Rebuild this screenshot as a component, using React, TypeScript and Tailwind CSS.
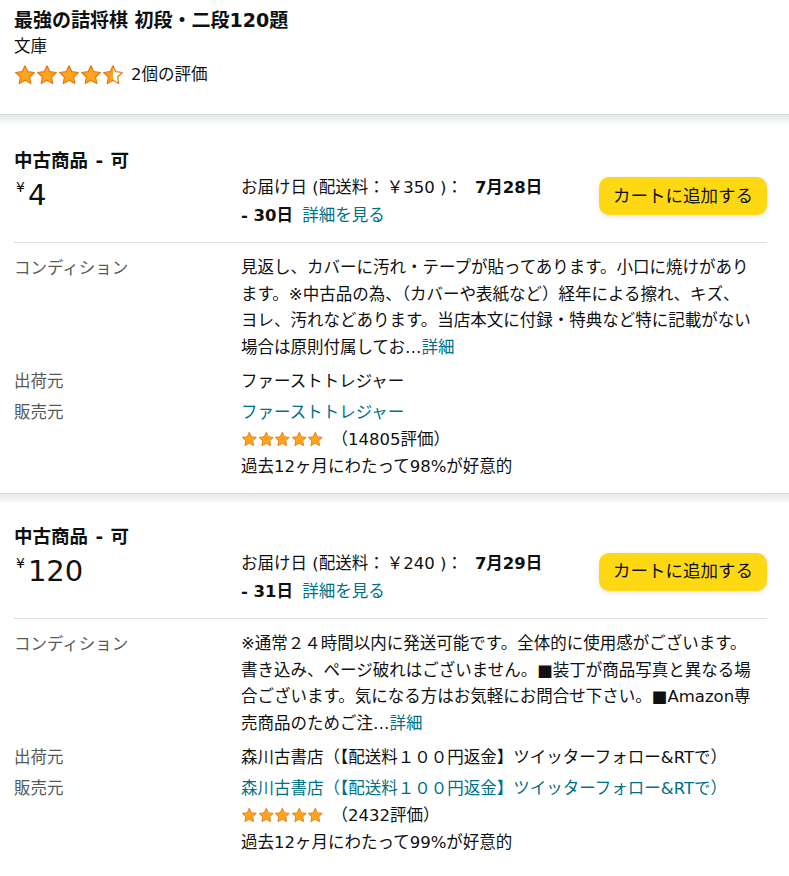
import React from 'react';

type Offer = {
  price: string;
  shipping: string;
  dateFrom: string;
  dateTo: string;
  condition: string[];
  shipper: string;
  seller: string;
  ratings: string;
  positive: string;
};

const OFFERS: Offer[] = [
  {
    price: '4',
    shipping: '350',
    dateFrom: '7月28日',
    dateTo: '- 30日',
    condition: [
      '見返し、カバーに汚れ・テープが貼ってあります。小口に焼けがあり',
      'ます。※中古品の為、（カバーや表紙など）経年による擦れ、キズ、',
      'ヨレ、汚れなどあります。当店本文に付録・特典など特に記載がない',
      '場合は原則付属してお…',
    ],
    shipper: 'ファーストトレジャー',
    seller: 'ファーストトレジャー',
    ratings: '（14805評価）',
    positive: '過去12ヶ月にわたって98%が好意的',
  },
  {
    price: '120',
    shipping: '240',
    dateFrom: '7月29日',
    dateTo: '- 31日',
    condition: [
      '※通常２４時間以内に発送可能です。全体的に使用感がございます。',
      '書き込み、ページ破れはございません。■装丁が商品写真と異なる場',
      '合ございます。気になる方はお気軽にお問合せ下さい。■Amazon専',
      '売商品のためご注…',
    ],
    shipper: '森川古書店（【配送料１００円返金】ツイッターフォロー&RTで）',
    seller: '森川古書店（【配送料１００円返金】ツイッターフォロー&RTで）',
    ratings: '（2432評価）',
    positive: '過去12ヶ月にわたって99%が好意的',
  },
];

const STAR = 'M12 1.8l3.1 6.6 7.1.9-5.2 4.9 1.3 7.1L12 17.8l-6.3 3.5 1.3-7.1L1.8 9.3l7.1-.9z';

function Star({ size, fill, id }: { size: number; fill: 'full' | 'half'; id: string }) {
  return (
    <svg width={size} height={size} viewBox="0 0 24 24">
      <defs>
        <linearGradient id={id} x1="0" x2="1" y1="0" y2="0">
          <stop offset="50%" stopColor="#FFA41C" />
          <stop offset="50%" stopColor="#ffffff" />
        </linearGradient>
      </defs>
      <path d={STAR} fill={fill === 'full' ? '#FFA41C' : `url(#${id})`} stroke="#E47911" strokeWidth="1.3" strokeLinejoin="round" />
    </svg>
  );
}

function Divider() {
  return <div className="h-[9px] border-t border-[#d5dbdb] bg-[linear-gradient(#e4eaeb,#f7f9f9)]" />;
}

function Row({ label, children }: { label: string; children: React.ReactNode }) {
  return (
    <div className="flex">
      <div className="w-[227px] shrink-0 text-[#565959]">{label}</div>
      <div className="min-w-0 flex-1">{children}</div>
    </div>
  );
}

function OfferBlock({ o, idx }: { o: Offer; idx: number }) {
  return (
    <div className={`pl-[14px] pr-[22px] pb-[13px] ${idx === 0 ? 'pt-[26px]' : 'pt-[23px]'}`}>
      <div className="text-[18.5px] font-bold leading-[24px] [word-spacing:1px]">中古商品 - 可</div>
      <div className="flex items-start">
        <div className="flex w-[227px] shrink-0 items-start pt-[5px]">
          <span className="mt-[2px] ml-[2px] text-[14px] leading-[14px]">¥</span>
          <span className="ml-[3px] text-[29px] leading-[35px]">{o.price}</span>
        </div>
        <div className="flex-1 pt-[1px] leading-[28px]">
          お届け日 (配送料：<span className="ml-[2px]">￥{o.shipping}</span> )：<b className="ml-[12px]">{o.dateFrom}</b>
          <br />
          <b>{o.dateTo}</b> <span className="ml-[4px] text-[#007185]">詳細を見る</span>
        </div>
        <button className="mt-[4px] h-[38px] rounded-[10px] bg-[#FFD814] px-[14px] text-[17.5px] text-[#0F1111] shadow-[0_2px_5px_rgba(213,217,217,0.6)]">
          カートに追加する
        </button>
      </div>
      <div className="mt-[12px] border-t border-[#dddddd]" />
      <div className="mt-[12px] flex flex-col">
        <Row label="コンディション">
          <div className="leading-[26.7px]">
            {o.condition.map((line, i) => (
              <div key={i} className="whitespace-nowrap">
                {line}
                {i === o.condition.length - 1 && <span className="text-[#007185]">詳細</span>}
              </div>
            ))}
          </div>
        </Row>
        <div className="mt-[6px]">
          <Row label="出荷元">
            <div className="whitespace-nowrap">{o.shipper}</div>
          </Row>
        </div>
        <div className="mt-[4px]">
          <Row label="販売元">
            <div className="whitespace-nowrap text-[#007185]">{o.seller}</div>
            <div className="flex h-[27px] items-center">
              {[0, 1, 2, 3, 4].map((s) => (
                <Star key={s} size={16.5} fill="full" id={`s${idx}${s}`} />
              ))}
              <span className="ml-[8px]">{o.ratings}</span>
            </div>
            <div>{o.positive}</div>
          </Row>
        </div>
      </div>
    </div>
  );
}

export default function App() {
  return (
    <div className="min-h-[876px] w-[789px] bg-white font-['DejaVu_Sans','Noto_Sans_CJK_JP',sans-serif] text-[16.5px] leading-[27px] text-[#0F1111]">
      <div className="pl-[14px] pt-[7px] pb-[25px]">
        <div className="text-[19px] font-bold leading-[26px]">最強の詰将棋 初段・二段120題</div>
        <div className="leading-[27px]">文庫</div>
        <div className="flex h-[29px] items-center">
          {[0, 1, 2, 3, 4].map((s) => (
            <Star key={s} size={22} fill={s === 4 ? 'half' : 'full'} id={`h${s}`} />
          ))}
          <span className="ml-[7px]">2個の評価</span>
        </div>
      </div>
      {OFFERS.map((o, i) => (
        <React.Fragment key={i}>
          <Divider />
          <OfferBlock o={o} idx={i} />
        </React.Fragment>
      ))}
    </div>
  );
}
